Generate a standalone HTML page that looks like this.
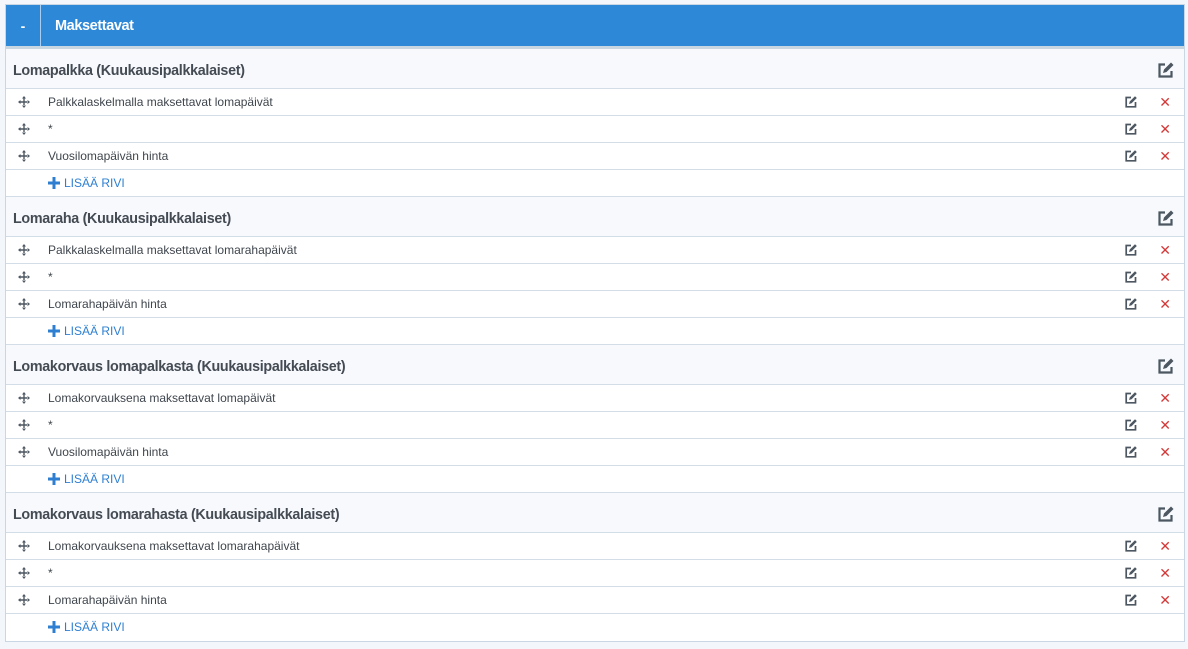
<!DOCTYPE html>
<html><head><meta charset="utf-8"><style>
body{margin:0;background:#f3f6fa;font-family:"Liberation Sans",Arial,sans-serif;width:1188px;height:649px;overflow:hidden}
.panel{position:absolute;left:5px;top:4px;width:1178px;height:636px;border:1px solid #c9d7e4;background:#fff}
.hdr{height:41px;background:#2e88d8;color:#fff;position:relative;border-bottom:3px solid #c8d6e2}
.hdr .m{position:absolute;left:0;top:0;width:34px;height:41px;border-right:1px solid #a9cdf0;text-align:center;line-height:42px;font-weight:bold;font-size:14px}
.hdr .t{position:absolute;left:49px;top:0;line-height:42px;font-weight:bold;font-size:14.5px;letter-spacing:-0.4px}
.sec{height:39px;background:#f7f9fd;border-bottom:1px solid #d3dde8;position:relative}
.sec .t{position:absolute;left:7px;top:0;line-height:45px;font-weight:bold;font-size:14.3px;color:#444b53;letter-spacing:-0.3px}
.sec svg{position:absolute;right:10px;top:13px}
.row{height:26px;border-bottom:1px solid #d3dde8;position:relative;font-size:12px;color:#3f464d}
.row .mv{position:absolute;left:12px;top:7px}
.row .tx{position:absolute;left:42px;top:0;line-height:26px}
.row .ed{position:absolute;right:47px;top:7px}
.row .x{position:absolute;right:13px;top:4px;color:#d23a3a;font-size:14px;line-height:18px}
.add .tx{color:#2e7fd1;left:58px}
.add .pl{position:absolute;left:42px;top:7px}
.last{border-bottom:none}
</style></head><body><div class="panel">
<div class="hdr"><div class="m">-</div><div class="t">Maksettavat</div></div>

<div class="sec"><div class="t">Lomapalkka (Kuukausipalkkalaiset)</div><svg width="17" height="17" viewBox="0 0 17 17"><path d="M8 2.5H2.5v12h12V9" fill="none" stroke="#4d5761" stroke-width="2.2"/><path d="M6 11l1-3.5 7-7 2.5 2.5-7 7z" fill="#4d5761"/></svg></div>
<div class="row"><svg class="mv" width="12" height="12" viewBox="0 0 12 12"><path d="M6 0l2 2.5H4zM6 12l2-2.5H4zM0 6l2.5-2v4zM12 6l-2.5-2v4zM5.3 2h1.4v8H5.3zM2 5.3h8v1.4H2z" fill="#4d5761"/></svg><div class="tx">Palkkalaskelmalla maksettavat lomapäivät</div><svg class="ed" width="12" height="12" viewBox="0 0 12 12"><path d="M6 1.5H1.2v9.3h9.3V6" fill="none" stroke="#4d5761" stroke-width="1.7"/><path d="M4 8l.8-2.6L10 .2 11.8 2 6.6 7.2z" fill="#4d5761"/></svg><div class="x">✕</div></div>
<div class="row"><svg class="mv" width="12" height="12" viewBox="0 0 12 12"><path d="M6 0l2 2.5H4zM6 12l2-2.5H4zM0 6l2.5-2v4zM12 6l-2.5-2v4zM5.3 2h1.4v8H5.3zM2 5.3h8v1.4H2z" fill="#4d5761"/></svg><div class="tx">*</div><svg class="ed" width="12" height="12" viewBox="0 0 12 12"><path d="M6 1.5H1.2v9.3h9.3V6" fill="none" stroke="#4d5761" stroke-width="1.7"/><path d="M4 8l.8-2.6L10 .2 11.8 2 6.6 7.2z" fill="#4d5761"/></svg><div class="x">✕</div></div>
<div class="row"><svg class="mv" width="12" height="12" viewBox="0 0 12 12"><path d="M6 0l2 2.5H4zM6 12l2-2.5H4zM0 6l2.5-2v4zM12 6l-2.5-2v4zM5.3 2h1.4v8H5.3zM2 5.3h8v1.4H2z" fill="#4d5761"/></svg><div class="tx">Vuosilomapäivän hinta</div><svg class="ed" width="12" height="12" viewBox="0 0 12 12"><path d="M6 1.5H1.2v9.3h9.3V6" fill="none" stroke="#4d5761" stroke-width="1.7"/><path d="M4 8l.8-2.6L10 .2 11.8 2 6.6 7.2z" fill="#4d5761"/></svg><div class="x">✕</div></div>
<div class="row add"><svg class="pl" width="12" height="12" viewBox="0 0 12 12"><path d="M4.5 0h3v4.5H12v3H7.5V12h-3V7.5H0v-3h4.5z" fill="#2e7fd1"/></svg><div class="tx">LISÄÄ RIVI</div></div>

<div class="sec"><div class="t">Lomaraha (Kuukausipalkkalaiset)</div><svg width="17" height="17" viewBox="0 0 17 17"><path d="M8 2.5H2.5v12h12V9" fill="none" stroke="#4d5761" stroke-width="2.2"/><path d="M6 11l1-3.5 7-7 2.5 2.5-7 7z" fill="#4d5761"/></svg></div>
<div class="row"><svg class="mv" width="12" height="12" viewBox="0 0 12 12"><path d="M6 0l2 2.5H4zM6 12l2-2.5H4zM0 6l2.5-2v4zM12 6l-2.5-2v4zM5.3 2h1.4v8H5.3zM2 5.3h8v1.4H2z" fill="#4d5761"/></svg><div class="tx">Palkkalaskelmalla maksettavat lomarahapäivät</div><svg class="ed" width="12" height="12" viewBox="0 0 12 12"><path d="M6 1.5H1.2v9.3h9.3V6" fill="none" stroke="#4d5761" stroke-width="1.7"/><path d="M4 8l.8-2.6L10 .2 11.8 2 6.6 7.2z" fill="#4d5761"/></svg><div class="x">✕</div></div>
<div class="row"><svg class="mv" width="12" height="12" viewBox="0 0 12 12"><path d="M6 0l2 2.5H4zM6 12l2-2.5H4zM0 6l2.5-2v4zM12 6l-2.5-2v4zM5.3 2h1.4v8H5.3zM2 5.3h8v1.4H2z" fill="#4d5761"/></svg><div class="tx">*</div><svg class="ed" width="12" height="12" viewBox="0 0 12 12"><path d="M6 1.5H1.2v9.3h9.3V6" fill="none" stroke="#4d5761" stroke-width="1.7"/><path d="M4 8l.8-2.6L10 .2 11.8 2 6.6 7.2z" fill="#4d5761"/></svg><div class="x">✕</div></div>
<div class="row"><svg class="mv" width="12" height="12" viewBox="0 0 12 12"><path d="M6 0l2 2.5H4zM6 12l2-2.5H4zM0 6l2.5-2v4zM12 6l-2.5-2v4zM5.3 2h1.4v8H5.3zM2 5.3h8v1.4H2z" fill="#4d5761"/></svg><div class="tx">Lomarahapäivän hinta</div><svg class="ed" width="12" height="12" viewBox="0 0 12 12"><path d="M6 1.5H1.2v9.3h9.3V6" fill="none" stroke="#4d5761" stroke-width="1.7"/><path d="M4 8l.8-2.6L10 .2 11.8 2 6.6 7.2z" fill="#4d5761"/></svg><div class="x">✕</div></div>
<div class="row add"><svg class="pl" width="12" height="12" viewBox="0 0 12 12"><path d="M4.5 0h3v4.5H12v3H7.5V12h-3V7.5H0v-3h4.5z" fill="#2e7fd1"/></svg><div class="tx">LISÄÄ RIVI</div></div>

<div class="sec"><div class="t">Lomakorvaus lomapalkasta (Kuukausipalkkalaiset)</div><svg width="17" height="17" viewBox="0 0 17 17"><path d="M8 2.5H2.5v12h12V9" fill="none" stroke="#4d5761" stroke-width="2.2"/><path d="M6 11l1-3.5 7-7 2.5 2.5-7 7z" fill="#4d5761"/></svg></div>
<div class="row"><svg class="mv" width="12" height="12" viewBox="0 0 12 12"><path d="M6 0l2 2.5H4zM6 12l2-2.5H4zM0 6l2.5-2v4zM12 6l-2.5-2v4zM5.3 2h1.4v8H5.3zM2 5.3h8v1.4H2z" fill="#4d5761"/></svg><div class="tx">Lomakorvauksena maksettavat lomapäivät</div><svg class="ed" width="12" height="12" viewBox="0 0 12 12"><path d="M6 1.5H1.2v9.3h9.3V6" fill="none" stroke="#4d5761" stroke-width="1.7"/><path d="M4 8l.8-2.6L10 .2 11.8 2 6.6 7.2z" fill="#4d5761"/></svg><div class="x">✕</div></div>
<div class="row"><svg class="mv" width="12" height="12" viewBox="0 0 12 12"><path d="M6 0l2 2.5H4zM6 12l2-2.5H4zM0 6l2.5-2v4zM12 6l-2.5-2v4zM5.3 2h1.4v8H5.3zM2 5.3h8v1.4H2z" fill="#4d5761"/></svg><div class="tx">*</div><svg class="ed" width="12" height="12" viewBox="0 0 12 12"><path d="M6 1.5H1.2v9.3h9.3V6" fill="none" stroke="#4d5761" stroke-width="1.7"/><path d="M4 8l.8-2.6L10 .2 11.8 2 6.6 7.2z" fill="#4d5761"/></svg><div class="x">✕</div></div>
<div class="row"><svg class="mv" width="12" height="12" viewBox="0 0 12 12"><path d="M6 0l2 2.5H4zM6 12l2-2.5H4zM0 6l2.5-2v4zM12 6l-2.5-2v4zM5.3 2h1.4v8H5.3zM2 5.3h8v1.4H2z" fill="#4d5761"/></svg><div class="tx">Vuosilomapäivän hinta</div><svg class="ed" width="12" height="12" viewBox="0 0 12 12"><path d="M6 1.5H1.2v9.3h9.3V6" fill="none" stroke="#4d5761" stroke-width="1.7"/><path d="M4 8l.8-2.6L10 .2 11.8 2 6.6 7.2z" fill="#4d5761"/></svg><div class="x">✕</div></div>
<div class="row add"><svg class="pl" width="12" height="12" viewBox="0 0 12 12"><path d="M4.5 0h3v4.5H12v3H7.5V12h-3V7.5H0v-3h4.5z" fill="#2e7fd1"/></svg><div class="tx">LISÄÄ RIVI</div></div>

<div class="sec"><div class="t">Lomakorvaus lomarahasta (Kuukausipalkkalaiset)</div><svg width="17" height="17" viewBox="0 0 17 17"><path d="M8 2.5H2.5v12h12V9" fill="none" stroke="#4d5761" stroke-width="2.2"/><path d="M6 11l1-3.5 7-7 2.5 2.5-7 7z" fill="#4d5761"/></svg></div>
<div class="row"><svg class="mv" width="12" height="12" viewBox="0 0 12 12"><path d="M6 0l2 2.5H4zM6 12l2-2.5H4zM0 6l2.5-2v4zM12 6l-2.5-2v4zM5.3 2h1.4v8H5.3zM2 5.3h8v1.4H2z" fill="#4d5761"/></svg><div class="tx">Lomakorvauksena maksettavat lomarahapäivät</div><svg class="ed" width="12" height="12" viewBox="0 0 12 12"><path d="M6 1.5H1.2v9.3h9.3V6" fill="none" stroke="#4d5761" stroke-width="1.7"/><path d="M4 8l.8-2.6L10 .2 11.8 2 6.6 7.2z" fill="#4d5761"/></svg><div class="x">✕</div></div>
<div class="row"><svg class="mv" width="12" height="12" viewBox="0 0 12 12"><path d="M6 0l2 2.5H4zM6 12l2-2.5H4zM0 6l2.5-2v4zM12 6l-2.5-2v4zM5.3 2h1.4v8H5.3zM2 5.3h8v1.4H2z" fill="#4d5761"/></svg><div class="tx">*</div><svg class="ed" width="12" height="12" viewBox="0 0 12 12"><path d="M6 1.5H1.2v9.3h9.3V6" fill="none" stroke="#4d5761" stroke-width="1.7"/><path d="M4 8l.8-2.6L10 .2 11.8 2 6.6 7.2z" fill="#4d5761"/></svg><div class="x">✕</div></div>
<div class="row"><svg class="mv" width="12" height="12" viewBox="0 0 12 12"><path d="M6 0l2 2.5H4zM6 12l2-2.5H4zM0 6l2.5-2v4zM12 6l-2.5-2v4zM5.3 2h1.4v8H5.3zM2 5.3h8v1.4H2z" fill="#4d5761"/></svg><div class="tx">Lomarahapäivän hinta</div><svg class="ed" width="12" height="12" viewBox="0 0 12 12"><path d="M6 1.5H1.2v9.3h9.3V6" fill="none" stroke="#4d5761" stroke-width="1.7"/><path d="M4 8l.8-2.6L10 .2 11.8 2 6.6 7.2z" fill="#4d5761"/></svg><div class="x">✕</div></div>
<div class="row add last"><svg class="pl" width="12" height="12" viewBox="0 0 12 12"><path d="M4.5 0h3v4.5H12v3H7.5V12h-3V7.5H0v-3h4.5z" fill="#2e7fd1"/></svg><div class="tx">LISÄÄ RIVI</div></div>
</div></body></html>
